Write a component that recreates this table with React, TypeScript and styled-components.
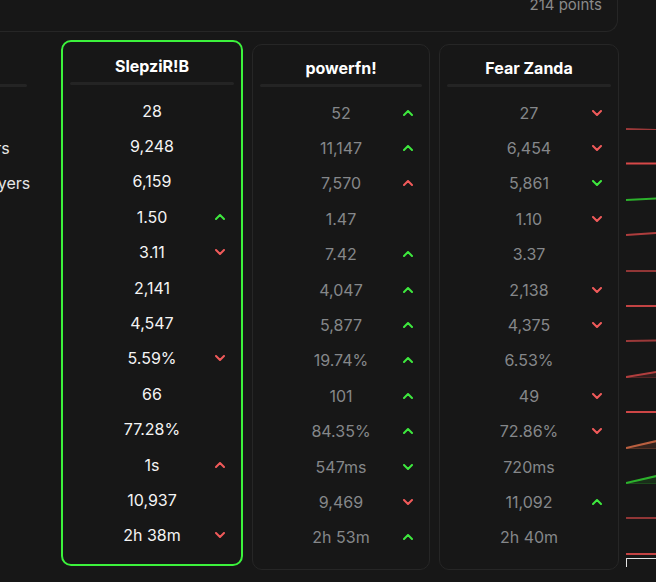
import React from "react";
import styled, { createGlobalStyle } from "styled-components";

const GlobalStyle = createGlobalStyle`
  html, body {
    margin: 0;
    padding: 0;
    background: #171717;
    overflow: hidden;
  }
  body {
    font-family: Inter, "Noto Sans", "Liberation Sans", sans-serif;
    color: #f2f2f2;
  }
`;

const ROW_H = 35.4;

type Trend = "up-good" | "up-bad" | "down-good" | "down-bad" | null;

const labels = [
  "Eliminations",
  "Damage to Players",
  "Damage from Players",
  "Damage Ratio",
  "K/D Ratio",
  "Hits",
  "Shots",
  "Headshot %",
  "Matches",
  "Accuracy",
  "Reaction Time",
  "Materials",
  "Time Alive",
];

type Player = {
  name: string;
  width: number;
  highlight?: boolean;
  stats: [string, Trend][];
};

const players: Player[] = [
  {
    name: "SlepziR!B",
    width: 182,
    highlight: true,
    stats: [
      ["28", null],
      ["9,248", null],
      ["6,159", null],
      ["1.50", "up-good"],
      ["3.11", "down-bad"],
      ["2,141", null],
      ["4,547", null],
      ["5.59%", "down-bad"],
      ["66", null],
      ["77.28%", null],
      ["1s", "up-bad"],
      ["10,937", null],
      ["2h 38m", "down-bad"],
    ],
  },
  {
    name: "powerfn!",
    width: 178,
    stats: [
      ["52", "up-good"],
      ["11,147", "up-good"],
      ["7,570", "up-bad"],
      ["1.47", null],
      ["7.42", "up-good"],
      ["4,047", "up-good"],
      ["5,877", "up-good"],
      ["19.74%", "up-good"],
      ["101", "up-good"],
      ["84.35%", "up-good"],
      ["547ms", "down-good"],
      ["9,469", "down-bad"],
      ["2h 53m", "up-good"],
    ],
  },
  {
    name: "Fear Zanda",
    width: 180,
    stats: [
      ["27", "down-bad"],
      ["6,454", "down-bad"],
      ["5,861", "down-good"],
      ["1.10", "down-bad"],
      ["3.37", null],
      ["2,138", "down-bad"],
      ["4,375", "down-bad"],
      ["6.53%", null],
      ["49", "down-bad"],
      ["72.86%", "down-bad"],
      ["720ms", null],
      ["11,092", "up-good"],
      ["2h 40m", null],
    ],
  },
];

type Spark = { color: string; y0: number; y1: number; opacity: number; area?: boolean };
const RED = "#e24b4b";
const GREEN = "#2fc22f";
const sparks: Spark[] = [
  { color: RED, y0: 34, y1: 35, opacity: 0.65 },
  { color: RED, y0: 33.6, y1: 33.6, opacity: 0.95 },
  { color: GREEN, y0: 34, y1: 32.5, opacity: 0.9 },
  { color: RED, y0: 34, y1: 32, opacity: 0.75 },
  { color: RED, y0: 34, y1: 34, opacity: 0.6 },
  { color: RED, y0: 34, y1: 34, opacity: 0.85 },
  { color: RED, y0: 34, y1: 33.5, opacity: 0.65 },
  { color: RED, y0: 34, y1: 29, opacity: 0.75, area: true },
  { color: RED, y0: 34, y1: 34, opacity: 0.9 },
  { color: "#e0704a", y0: 34, y1: 23, opacity: 0.8, area: true },
  { color: GREEN, y0: 34, y1: 25, opacity: 0.9, area: true },
  { color: RED, y0: 34, y1: 34, opacity: 0.6 },
  { color: RED, y0: 34, y1: 34, opacity: 0.85 },
];

const Page = styled.div`
  margin-left: -138px;
  width: 1100px;
  display: flex;
  flex-direction: column;
`;

const TopPanel = styled.div`
  box-sizing: border-box;
  width: 756px;
  margin-top: -30px;
  padding: 25px 15px 16px;
  border: 1px solid #262626;
  border-top: none;
  border-radius: 0 0 12px 12px;
  display: flex;
  justify-content: flex-end;
`;

const Points = styled.span`
  font-size: 15px;
  line-height: 20px;
  color: #8a8a8a;
`;

const Compare = styled.div`
  display: flex;
  align-items: flex-start;
  gap: 9px;
  margin-top: 8px;
`;

const LabelColumn = styled.div`
  box-sizing: border-box;
  width: 190px;
  margin-top: 4px;
  padding: 14px 25px 0 6px;
`;

const HeaderSpacer = styled.div`
  height: 20px;
`;

const Divider = styled.div`
  height: 3px;
  background: #242424;
  border-radius: 2px;
  margin: 6px 0 8px;
`;

const Label = styled.div`
  height: ${ROW_H}px;
  display: flex;
  align-items: center;
  white-space: nowrap;
  font-size: 16px;
  color: #e6e6e6;
`;

const Card = styled.div<{ $highlight?: boolean; $w: number }>`
  box-sizing: border-box;
  flex: none;
  width: ${(p) => p.$w}px;
  margin-top: ${(p) => (p.$highlight ? 0 : 4)}px;
  padding: ${(p) => (p.$highlight ? "14px 7px 11px" : "13px 7px 14px")};
  border: ${(p) => (p.$highlight ? "2px solid #3cf23c" : "1px solid #262626")};
  border-radius: 10px;
  background: #171717;
`;

const Name = styled.div`
  height: 20px;
  line-height: 20px;
  text-align: center;
  font-size: 16px;
  font-weight: 700;
  color: #ffffff;
`;

const StatRow = styled.div`
  height: ${ROW_H}px;
  display: grid;
  grid-template-columns: 1fr auto 1fr;
  align-items: center;
  padding-right: 9px;
  padding-left: 9px;
`;

const Value = styled.span<{ $bright?: boolean }>`
  grid-column: 2;
  font-size: 16px;
  line-height: 20px;
  color: ${(p) => (p.$bright ? "#f4f4f4" : "#85878a")};
  white-space: nowrap;
`;

const ChevronBox = styled.span`
  grid-column: 3;
  justify-self: end;
  display: flex;
  align-items: center;
`;

const SparkColumn = styled.div`
  flex: none;
  width: 140px;
  margin-left: -2px;
  margin-top: 4px;
  padding-top: 51px;
`;

const SparkRow = styled.div`
  height: ${ROW_H}px;
  display: block;
`;

const SparkAxis = styled.div`
  margin-top: 3px;
  height: 8px;
  width: 120px;
  border-top: 1px solid #e4e4e4;
  border-left: 1px solid #e4e4e4;
`;

function Chevron({ trend }: { trend: Trend }) {
  if (!trend) return null;
  const up = trend.startsWith("up");
  const good = trend.endsWith("good");
  const color = good ? "#3ee83e" : "#f05a5a";
  return (
    <svg width="10" height="6" viewBox="0 0 10 6">
      <polyline
        points={up ? "1,5 5,1 9,5" : "1,1 5,5 9,1"}
        fill="none"
        stroke={color}
        strokeWidth="2"
        strokeLinecap="round"
        strokeLinejoin="round"
      />
    </svg>
  );
}

function Sparkline({ s }: { s: Spark }) {
  const w = 140;
  const slope = (s.y1 - s.y0) / 30;
  const yEnd = Math.max(2, s.y0 + slope * w);
  const line = `0,${s.y0} ${w},${yEnd}`;
  const area = `0,${s.y0} ${w},${yEnd} ${w},34.5 0,34.5`;
  return (
    <svg width={w} height={ROW_H} viewBox={`0 0 ${w} ${ROW_H}`} style={{ display: "block" }}>
      {s.area && <polygon points={area} fill={s.color} opacity={0.14} />}
      {s.area && <line x1="0" y1="34.5" x2={w} y2="34.5" stroke={s.color} strokeWidth="1" opacity={0.25} />}
      <polyline points={line} fill="none" stroke={s.color} strokeWidth="2" opacity={s.opacity} />
    </svg>
  );
}

export default function App() {
  return (
    <>
      <GlobalStyle />
      <Page>
        <TopPanel>
          <Points>214 points</Points>
        </TopPanel>
        <Compare>
          <LabelColumn>
            <HeaderSpacer />
            <Divider />
            {labels.map((l) => (
              <Label key={l}>{l}</Label>
            ))}
          </LabelColumn>
          {players.map((p) => (
            <Card key={p.name} $highlight={p.highlight} $w={p.width}>
              <Name>{p.name}</Name>
              <Divider />
              {p.stats.map(([v, t], i) => (
                <StatRow key={i}>
                  <Value $bright={p.highlight}>{v}</Value>
                  <ChevronBox>
                    <Chevron trend={t} />
                  </ChevronBox>
                </StatRow>
              ))}
            </Card>
          ))}
          <SparkColumn>
            {sparks.map((s, i) => (
              <SparkRow key={i}>
                <Sparkline s={s} />
              </SparkRow>
            ))}
            <SparkAxis />
          </SparkColumn>
        </Compare>
      </Page>
    </>
  );
}
